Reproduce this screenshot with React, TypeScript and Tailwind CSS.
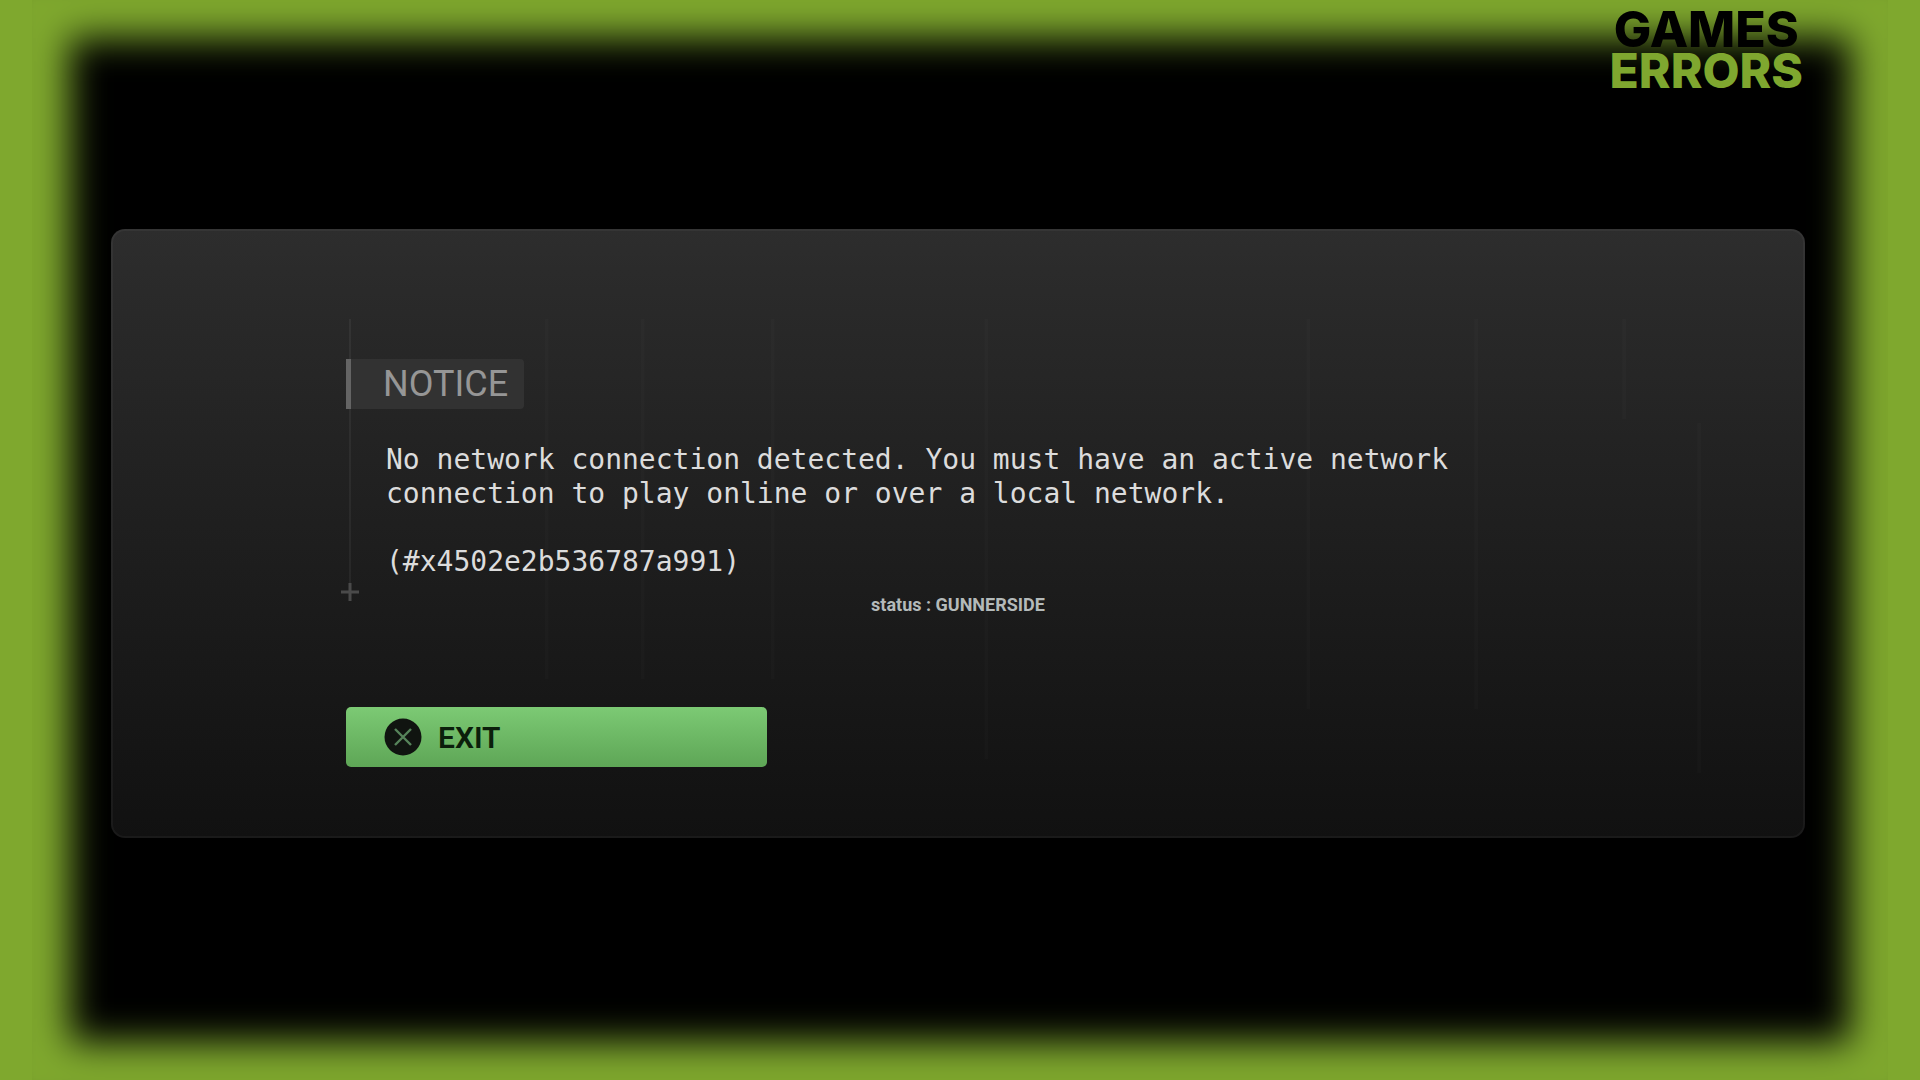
import React from 'react';

const MESSAGE =
    'No network connection detected. You must have an active network connection to play online or over a local network.';

const ERROR_CODE = '(#x4502e2b536787a991)';

const Brand: React.FC = () => (
    <header className="flex justify-end pr-[85px] pt-2">
        <div className="flex flex-col items-center font-['Inter',sans-serif] font-extrabold leading-[42px]">
            <span className="text-[50px] text-black">GAMES</span>
            <span className="text-[48px] text-[#7fa72f]">ERRORS</span>
        </div>
    </header>
);

const CrossIcon: React.FC = () => (
    <svg className="h-[38px] w-[38px]" viewBox="0 0 38 38" fill="none" aria-hidden="true">
        <circle cx="19" cy="19" r="18.5" fill="#101410" />
        <path d="M11 11 27 27M27 11 11 27" stroke="#56845a" strokeWidth="2.4" />
    </svg>
);

const PlusMark: React.FC = () => (
    <svg className="h-[18px] w-[18px]" viewBox="0 0 18 18" fill="none" aria-hidden="true">
        <path d="M9 0v18M0 9h18" stroke="#4a4a4a" strokeWidth="3" />
    </svg>
);

// Barely visible seams showing through the panel
const Backdrop: React.FC = () => (
    <svg
        className="absolute inset-0 h-full w-full"
        viewBox="0 0 1691 605"
        preserveAspectRatio="none"
        stroke="#ffffff"
        strokeOpacity="0.014"
        strokeWidth="4"
        aria-hidden="true"
    >
        <path d="M434 88v360M530 88v360M660 88v360M874 88v440M1196 88v390M1364 88v390M1512 88v100M1587 192v350" />
    </svg>
);

const App: React.FC = () => {
    return (
        <div className="min-h-screen bg-[#7fa82e] px-8">
            {/* Black screen with a soft green frame */}
            <div className="flex min-h-screen flex-col bg-black shadow-[inset_0_0_36px_38px_#7fa82e]">
                <Brand />

                <main className="relative mb-auto ml-[79px] mr-[83px] mt-[137px] rounded-[14px] border-2 border-white/4 bg-linear-to-b from-[#2d2d2d] to-[#111111] bg-origin-border px-[233px] pb-[69px] pt-[88px]">
                    <Backdrop />

                    <div className="relative pt-10">
                        {/* Rail running down to the plus mark */}
                        <div className="absolute bottom-[26px] left-[-5px] top-0 flex w-[18px] flex-col items-center">
                            <div className="w-[2px] flex-1 bg-white/5" />
                            <PlusMark />
                        </div>

                        <h1 className="relative flex h-[50px] w-[178px] items-center rounded-r-[4px] border-l-[5px] border-[#646464] bg-[#323232] pl-8 font-['Roboto',sans-serif] text-[36px] leading-[50px] text-[#969696]">
                            NOTICE
                        </h1>

                        <div className="max-w-[1120px] pl-10 pt-[34px] font-['DejaVu_Sans_Mono',monospace] text-[28px] leading-[34px] text-[#dcdcdc]">
                            <p>{MESSAGE}</p>
                            <p className="mt-[34px]">{ERROR_CODE}</p>
                        </div>

                        <p className="pb-3 pt-4 text-center font-['Roboto',sans-serif] text-[18px] font-bold leading-5 text-[#b4baba]">
                            status : GUNNERSIDE
                        </p>
                    </div>

                    <button
                        type="button"
                        className="relative mt-20 flex h-[60px] w-[421px] items-center gap-4 rounded-[5px] bg-linear-to-b from-[#7cca74] to-[#5ea656] pl-[38px] font-['Roboto',sans-serif] text-[30px] font-semibold text-[#0b1f0b]"
                    >
                        <CrossIcon />
                        EXIT
                    </button>
                </main>
            </div>
        </div>
    );
};

export default App;
